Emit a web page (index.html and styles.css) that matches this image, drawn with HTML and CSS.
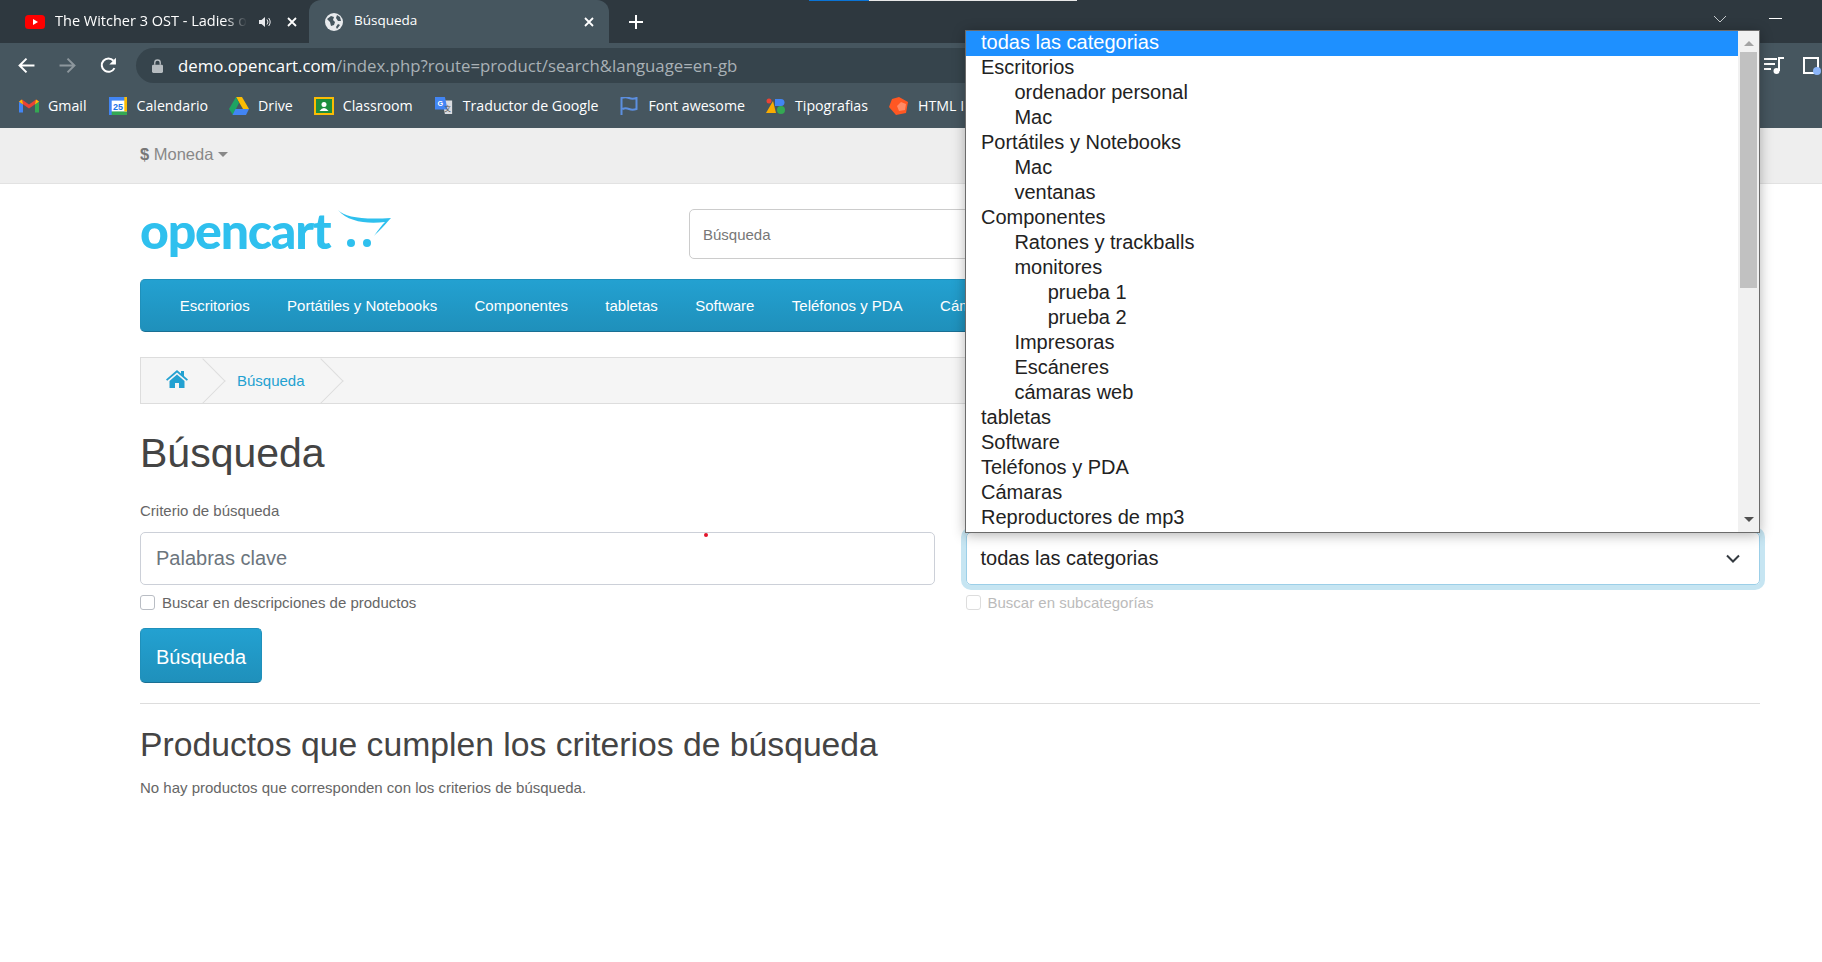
FILE: index.html
```html
<!DOCTYPE html>
<html lang="es">

<head>
    <meta charset="UTF-8">
    <meta name="viewport" content="width=device-width, initial-scale=1.0">
    <title>Búsqueda</title>
    <link rel="stylesheet" href="styles.css">
</head>

<body>
    <div class="load-line"><span></span></div>

    <!-- ventana del navegador -->
    <div class="tabstrip">
        <div class="tab">
            <svg class="tab-ico" viewBox="0 0 20 14"><rect width="20" height="14" rx="3.5" fill="#f00"/><path d="M8 4l5 3-5 3z" fill="#fff"/></svg>
            <span class="tab-title fade">The Witcher 3 OST - Ladies o</span>
            <svg class="sound-ico" viewBox="0 0 12 12"><path d="M0 4h2.500L6 1v10L2.500 8H0z" fill="#e8eaed"/><path d="M8 3.500q2 2.500 0 5M9.700 2q3 4 0 8" fill="none" stroke="#e8eaed" stroke-width="1"/></svg>
            <svg class="close-ico" viewBox="0 0 10 10"><path d="M1 1l8 8M9 1l-8 8" stroke="#fff" stroke-width="1.800"/></svg>
        </div>
        <div class="tab active">
            <svg class="tab-ico globe" viewBox="0 0 18 18"><circle cx="9" cy="9" r="9" fill="#e8eaed"/><path d="M2 6l4-3 3 1-1 3 2 2-1 3-3 1-1-4zM12 2l3 2 1 4-3 0-2-3zM13 11l2 1-3 4-1-2z" fill="#46565f"/></svg>
            <span class="tab-title">Búsqueda</span>
            <svg class="close-ico" viewBox="0 0 10 10"><path d="M1 1l8 8M9 1l-8 8" stroke="#fff" stroke-width="1.800"/></svg>
        </div>
        <svg class="plus-ico" viewBox="0 0 14 14"><path d="M7 0v14M0 7h14" stroke="#fff" stroke-width="2"/></svg>
        <div class="win-btns">
            <svg class="win-chevron" viewBox="0 0 14 8"><path d="M1 1l6 6 6-6" fill="none" stroke="#c6cacd" stroke-width="1"/></svg>
            <span class="win-min"></span>
        </div>
    </div>

    <div class="toolbar">
        <svg class="nav-ico" viewBox="0 0 16 16"><path d="M15.500 8H2M8 1.500L1.500 8 8 14.500" fill="none" stroke="#fff" stroke-width="1.900"/></svg>
        <svg class="nav-ico dim" viewBox="0 0 16 16"><path d="M.5 8H14M8 1.500L14.500 8 8 14.500" fill="none" stroke="#8d979d" stroke-width="1.900"/></svg>
        <svg class="nav-ico reload" viewBox="0 0 16 16"><path d="M13.600 10.500A6.300 6.300 0 1 1 12.700 3.500" fill="none" stroke="#fff" stroke-width="1.900"/><path d="M15 .8V7H8.800z" fill="#fff"/></svg>
        <div class="omnibox">
            <svg class="lock-ico" viewBox="0 0 12 15"><path d="M3 6V4a3 3 0 0 1 6 0v2" fill="none" stroke="#b6bcc0" stroke-width="1.500"/><rect y="6" width="12" height="9" rx="1.500" fill="#b6bcc0"/></svg>
            <span class="url">demo.opencart.com<span class="url-rest">/index.php?route=product/search&amp;language=en-gb</span></span>
        </div>
        <svg class="ext-ico music" viewBox="0 0 20 18"><path d="M0 2h13M0 7h11M0 12h7" stroke="#fff" stroke-width="2"/><path d="M15 14V1h5" fill="none" stroke="#fff" stroke-width="2"/><circle cx="12.500" cy="14" r="3" fill="#fff"/></svg>
        <svg class="ext-ico tablet" viewBox="0 0 18 18"><path d="M1 1h14v15H1z" fill="none" stroke="#fff" stroke-width="2"/><circle cx="14" cy="14" r="4" fill="#8ab4f8"/></svg>
    </div>

    <div class="bookmarks">
        <span class="bm"><svg class="bm-ico" viewBox="0 0 20 15"><path d="M0 3v11h4V6z" fill="#4285f4"/><path d="M20 3v11h-4V6z" fill="#34a853"/><path d="M0 3l10 7 10-7-3-2-7 5-7-5z" fill="#ea4335"/><path d="M0 3l3-2 1 5zM20 3l-3-2-1 5z" fill="#fbbc04"/></svg>Gmail</span>
        <span class="bm"><svg class="bm-ico" viewBox="0 0 20 20"><rect width="20" height="20" fill="#fff"/><rect width="20" height="4" fill="#4285f4"/><rect y="16" width="20" height="4" fill="#34a853"/><rect width="3" height="20" fill="#4285f4"/><rect x="17" width="3" height="16" fill="#fbbc04"/><text class="cal-num" x="10" y="14.500">25</text></svg>Calendario</span>
        <span class="bm"><svg class="bm-ico" viewBox="0 0 20 18"><path d="M7 0h6l7 12h-6z" fill="#fbbc04"/><path d="M7 0l3 6-6 12-4-6z" fill="#1ea362"/><path d="M6.500 12H20l-3 6H3.500z" fill="#4285f4"/></svg>Drive</span>
        <span class="bm"><svg class="bm-ico" viewBox="0 0 20 18"><rect width="20" height="18" fill="#fbbc04"/><rect x="2" y="2" width="16" height="14" fill="#1e8e3e"/><circle cx="10" cy="7.500" r="2.500" fill="#fff"/><path d="M5.500 14q4.500-6 9 0z" fill="#fff"/></svg>Classroom</span>
        <span class="bm"><svg class="bm-ico" viewBox="0 0 20 20"><path d="M8 4h11v15H11z" fill="#dadce0"/><path d="M0 0h11l3 14H0z" fill="#4285f4"/><text class="tr-g" x="6" y="10">G</text><text class="tr-a" x="14" y="16">文</text></svg>Traductor de Google</span>
        <span class="bm"><svg class="bm-ico" viewBox="0 0 17 18"><path d="M1 18V1q4-1.500 7.500 0t7.500 0v11q-4 1.500-7.500 0T2 12" fill="none" stroke="#5c8fe0" stroke-width="2"/></svg>Font awesome</span>
        <span class="bm"><svg class="bm-ico" viewBox="0 0 20 16"><path d="M0 15L7 3l3 12z" fill="#f9ab00"/><circle cx="3" cy="3" r="2.500" fill="#ea4335"/><path d="M9 1h6a3 3 0 0 1 0 7H9z" fill="#4285f4"/><circle cx="15" cy="12" r="4" fill="#34a853"/></svg>Tipografias</span>
        <span class="bm"><svg class="bm-ico" viewBox="0 0 20 18"><path d="M10 0l9 5-2 11-10 2-7-8 3-8z" fill="#ff5722"/><path d="M12 5l5 2-1 6-6 1-2-5z" fill="#ff8a65"/></svg>HTML I</span>
    </div>

    <!-- tienda -->
    <div class="top-bar">
        <a class="currency"><b>$</b> Moneda <i class="caret"></i></a>
    </div>

    <div class="page">
        <header class="store-head">
            <div class="logo">
                <span class="logo-text">opencart</span>
                <svg class="logo-cart" viewBox="0 0 54 40"><path d="M1 0C8 7 25 10 54 8 47 16 42 21 37 26 41 20 45 15 48 12 30 14 11 12 1 0Z" fill="#2fc0ee"/><circle cx="14" cy="33" r="4" fill="#2fc0ee"/><circle cx="30" cy="33" r="4" fill="#2fc0ee"/></svg>
            </div>
            <input class="store-search" type="text" placeholder="Búsqueda">
        </header>

        <nav class="main-nav">
            <a>Escritorios</a>
            <a>Portátiles y Notebooks</a>
            <a>Componentes</a>
            <a>tabletas</a>
            <a>Software</a>
            <a>Teléfonos y PDA</a>
            <a>Cámaras</a>
        </nav>

        <ul class="breadcrumb">
            <li><svg class="home-ico" viewBox="0 0 22 18"><path d="M11 0l4 3.500V1h3v5l4 3.500-1.200 1.300L11 2.400 1.200 10.800 0 9.500z" fill="#23a1d1"/><path d="M3.500 11L11 4.500l7.500 6.500v7H13v-5H9v5H3.500z" fill="#23a1d1"/></svg></li>
            <li><a>Búsqueda</a></li>
        </ul>

        <h1>Búsqueda</h1>
        <label class="criteria-label">Criterio de búsqueda</label>

        <div class="search-form">
            <div class="search-col">
                <input class="field" type="text" placeholder="Palabras clave">
                <label class="check"><input type="checkbox">Buscar en descripciones de productos</label>
            </div>
            <div class="search-col">
                <div class="field select-field">
                    todas las categorias
                    <svg class="select-chevron" viewBox="0 0 14 9"><path d="M1 1.500l6 6 6-6" fill="none" stroke="#343a40" stroke-width="2"/></svg>
                </div>
                <label class="check disabled"><input type="checkbox" disabled>Buscar en subcategorías</label>
            </div>
        </div>

        <button class="btn-search">Búsqueda</button>
        <hr>
        <h2>Productos que cumplen los criterios de búsqueda</h2>
        <p class="no-results">No hay productos que corresponden con los criterios de búsqueda.</p>
    </div>

    <span class="red-dot"></span>

    <!-- lista desplegada del select -->
    <div class="select-popup">
        <ul class="options">
            <li class="selected">todas las categorias</li>
            <li>Escritorios</li>
            <li class="sub">ordenador personal</li>
            <li class="sub">Mac</li>
            <li>Portátiles y Notebooks</li>
            <li class="sub">Mac</li>
            <li class="sub">ventanas</li>
            <li>Componentes</li>
            <li class="sub">Ratones y trackballs</li>
            <li class="sub">monitores</li>
            <li class="sub2">prueba 1</li>
            <li class="sub2">prueba 2</li>
            <li class="sub">Impresoras</li>
            <li class="sub">Escáneres</li>
            <li class="sub">cámaras web</li>
            <li>tabletas</li>
            <li>Software</li>
            <li>Teléfonos y PDA</li>
            <li>Cámaras</li>
            <li>Reproductores de mp3</li>
        </ul>
        <div class="popup-scroll">
            <i class="arrow-up"></i>
            <div class="thumb"></div>
            <i class="arrow-down"></i>
        </div>
    </div>
</body>

</html>
```

FILE: styles.css
```css
* {
    box-sizing: border-box;
}

body {
    margin: 0;
    position: relative;
    height: 962px;
    overflow: hidden;
    background: #fff;
    color: #666;
    font-family: "Liberation Sans", Arial, sans-serif;
    font-size: 15px;
}

/* barra fina arriba */
.load-line {
    position: absolute;
    top: 0;
    left: 809px;
    width: 268px;
    height: 1px;
    background: #e8e8e8;
    z-index: 3;
}

.load-line span {
    display: block;
    width: 60px;
    height: 1px;
    background: #0a74d6;
}

/* pestañas */
.tabstrip {
    height: 43px;
    background: #2e383f;
    display: flex;
    align-items: center;
    color: #fff;
    font-family: "Open Sans", sans-serif;
    font-size: 13.5px;
}

.tab {
    width: 309px;
    height: 43px;
    padding: 0 14px 0 25px;
    display: flex;
    align-items: center;
}

.tab.active {
    width: 300px;
    background: #46565f;
    border-radius: 12px 12px 0 0;
    padding: 0 15px 0 16px;
}

.tab-ico {
    width: 20px;
    height: 14px;
    flex: none;
    margin-right: 10px;
}

.tab-ico.globe {
    width: 18px;
    height: 18px;
    margin-right: 11px;
}

.tab-title {
    flex: 1;
    white-space: nowrap;
    margin-top: -3px;
}

.tab-title.fade {
    font-size: 14.5px;
    -webkit-mask-image: linear-gradient(to right, #000 88%, transparent 100%);
    mask-image: linear-gradient(to right, #000 88%, transparent 100%);
}

.sound-ico {
    width: 12px;
    height: 12px;
    margin: 0 16px 0 12px;
    flex: none;
}

.close-ico {
    width: 10px;
    height: 10px;
    flex: none;
}

.plus-ico {
    width: 14px;
    height: 14px;
    margin-left: 20px;
}

.win-btns {
    margin-left: auto;
    display: flex;
    align-items: center;
    padding-right: 40px;
    margin-top: -6px;
}

.win-chevron {
    width: 14px;
    height: 8px;
    margin-right: 42px;
}

.win-min {
    width: 13px;
    height: 1px;
    background: #fff;
}

/* barra de direcciones */
.toolbar {
    height: 40px;
    background: #46565f;
    padding: 5px 0 0 18px;
    display: flex;
    align-items: center;
}

.nav-ico {
    width: 17px;
    height: 17px;
    margin-right: 24px;
    flex: none;
}

.nav-ico.reload {
    margin-right: 19px;
}

.omnibox {
    flex: none;
    width: 1580px;
    height: 35px;
    background: #36444c;
    border-radius: 18px;
    padding-left: 16px;
    display: flex;
    align-items: center;
    font-family: "Open Sans", sans-serif;
    font-size: 16.8px;
    color: #fff;
}

.lock-ico {
    width: 11px;
    height: 14px;
    margin-right: 15px;
}

.url-rest {
    color: #a9b1b6;
}

.ext-ico {
    flex: none;
    width: 20px;
    height: 18px;
}

.ext-ico.music {
    margin-left: 48px;
}

.ext-ico.tablet {
    margin-left: 18px;
}

/* marcadores */
.bookmarks {
    height: 45px;
    background: #46565f;
    padding: 0 0 0 19px;
    display: flex;
    align-items: center;
    gap: 21px;
    color: #fff;
    font-family: "Open Sans", sans-serif;
    font-size: 14.2px;
    white-space: nowrap;
    overflow: hidden;
}

.bm {
    display: flex;
    align-items: center;
    flex: none;
}

.bm-ico {
    width: 20px;
    height: 18px;
    margin-right: 9px;
}

.cal-num {
    font: bold 10px "Liberation Sans", sans-serif;
    fill: #1a73e8;
    text-anchor: middle;
}

.tr-g {
    font: bold 8px "Liberation Sans", sans-serif;
    fill: #fff;
    text-anchor: middle;
}

.tr-a {
    font: 7px "Noto Sans CJK SC", sans-serif;
    fill: #555;
    text-anchor: middle;
}

/* tienda */
.top-bar {
    height: 56px;
    background: #eee;
    border-bottom: 1px solid #e2e2e2;
    padding: 0 62px 2px 140px;
    display: flex;
    align-items: center;
}

.currency {
    color: #888;
    font-size: 16.5px;
}

.currency b {
    color: #777;
}

.caret {
    display: inline-block;
    vertical-align: 3px;
    border-top: 5px solid #888;
    border-left: 5px solid transparent;
    border-right: 5px solid transparent;
}

.page {
    padding: 0 62px 0 140px;
}

.store-head {
    margin-top: 25px;
    height: 50px;
    display: flex;
    align-items: flex-start;
    justify-content: space-between;
}

.logo {
    display: flex;
    align-items: flex-start;
    height: 50px;
}

.logo-text {
    font-family: "Lato", sans-serif;
    font-weight: 900;
    font-size: 50px;
    line-height: 50px;
    letter-spacing: -1.200px;
    color: #2fc0ee;
    width: 197px;
    margin-top: -4px;
}

.logo-cart {
    width: 54px;
    height: 40px;
    margin-top: 1px;
}

.store-search {
    width: 1071px;
    height: 50px;
    border: 1px solid #ccc;
    border-radius: 5px;
    padding: 1px 13px 0;
    font: 15px "Liberation Sans", Arial, sans-serif;
    color: #666;
}

.store-search::placeholder {
    color: #777;
}

.main-nav {
    margin-top: 20px;
    height: 53px;
    padding: 0 20px;
    display: flex;
    align-items: center;
    background: linear-gradient(to bottom, #23a1d1, #1f90bb);
    border: 1px solid #1f90bb;
    border-bottom: 1px solid #1a6f93;
    border-radius: 5px;
}

.main-nav a {
    padding: 0 18.700px;
    color: #fff;
    font-size: 15px;
    white-space: nowrap;
}

.breadcrumb {
    list-style: none;
    margin: 25px 0 0;
    padding: 0;
    height: 47px;
    display: flex;
    align-items: center;
    background: #f5f5f5;
    border: 1px solid #ddd;
    overflow: hidden;
}

.breadcrumb li {
    position: relative;
    height: 45px;
    display: flex;
    align-items: center;
    padding: 0 25px;
}

.breadcrumb li:first-child {
    width: 78px;
}

.breadcrumb li:last-child {
    padding: 0 32px 0 18px;
}

.breadcrumb li::after {
    content: "";
    position: absolute;
    top: 7px;
    right: 0;
    width: 31px;
    height: 31px;
    border-top: 1px solid #ddd;
    border-right: 1px solid #ddd;
    transform: rotate(45deg);
}

.breadcrumb a {
    color: #23a1d1;
}

.home-ico {
    width: 22px;
    height: 18px;
    margin-top: -3px;
}

h1 {
    margin: 24px 0 0;
    height: 50px;
    line-height: 50px;
    font-size: 41px;
    font-weight: 400;
    color: #444;
}

.criteria-label {
    display: block;
    margin-top: 23px;
    height: 20px;
    line-height: 20px;
}

.search-form {
    margin-top: 11px;
    display: flex;
    gap: 31px;
}

.search-col {
    flex: 1;
}

.field {
    display: block;
    width: 100%;
    height: 53px;
    border: 1px solid #ccd0d8;
    border-radius: 5px;
    padding: 0 15px;
    font: 20px "Liberation Sans", Arial, sans-serif;
    color: #222;
}

.field::placeholder {
    color: #6c757d;
}

.select-field {
    display: flex;
    align-items: center;
    justify-content: space-between;
    padding-left: 14px;
    border-color: #9ccfe8;
    box-shadow: 0 0 0 5px #c6e5f2;
}

.select-chevron {
    width: 14px;
    height: 9px;
    margin-right: 4px;
}

.check {
    display: flex;
    align-items: center;
    margin-top: 10px;
    height: 15px;
    font-size: 15px;
}

.check input {
    appearance: none;
    width: 15px;
    height: 15px;
    margin: 0 7px 0 0;
    border: 1px solid #b9bdc4;
    border-radius: 3px;
    background: #fff;
}

.check.disabled {
    color: #bbb;
}

.check.disabled input {
    border-color: #ddd;
}

.btn-search {
    display: block;
    margin-top: 18px;
    width: 122px;
    height: 55px;
    padding-top: 4px;
    border: 1px solid #1f90bb;
    border-bottom-color: #1a6f93;
    border-radius: 5px;
    background: linear-gradient(to bottom, #23a1d1, #1f90bb);
    color: #fff;
    font: 20px "Liberation Sans", Arial, sans-serif;
}

hr {
    margin: 20px 0 0;
    border: 0;
    border-top: 1px solid #ddd;
}

h2 {
    margin: 18px 0 0;
    height: 44px;
    line-height: 44px;
    font-size: 33.7px;
    font-weight: 400;
    color: #444;
}

.no-results {
    margin: 12px 0 0;
    line-height: 20px;
}

.red-dot {
    position: absolute;
    left: 704px;
    top: 533px;
    width: 4px;
    height: 4px;
    border-radius: 50%;
    background: #e2152b;
}

/* lista abierta */
.select-popup {
    position: absolute;
    left: 965px;
    top: 30px;
    width: 795px;
    height: 503px;
    display: flex;
    background: #fff;
    border: 1px solid #6b6b6b;
    box-shadow: 0 2px 12px rgba(0, 0, 0, .3);
    z-index: 2;
}

.options {
    list-style: none;
    margin: 0;
    padding: 0;
    flex: 1;
    font-size: 20px;
    color: #222;
}

.options li {
    height: 25px;
    line-height: 23px;
    padding-left: 15px;
    white-space: nowrap;
}

.options li.sub {
    padding-left: 48.400px;
}

.options li.sub2 {
    padding-left: 81.700px;
}

.options li.selected {
    background: #1e90ff;
    color: #fff;
}

.popup-scroll {
    width: 21px;
    background: #f1f1f1;
    display: flex;
    flex-direction: column;
    align-items: center;
    position: relative;
}

.thumb {
    width: 17px;
    height: 236px;
    background: #c1c1c1;
    margin-top: 6px;
}

.arrow-up {
    margin-top: 10px;
    border-bottom: 5px solid #a3a3a3;
    border-left: 5px solid transparent;
    border-right: 5px solid transparent;
}

.arrow-down {
    margin-top: auto;
    margin-bottom: 10px;
    border-top: 5px solid #505050;
    border-left: 5px solid transparent;
    border-right: 5px solid transparent;
}
```
